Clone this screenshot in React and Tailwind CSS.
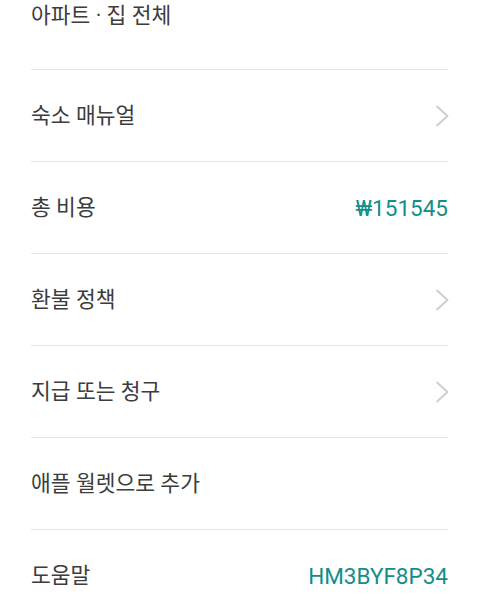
import React from "react";

const Chevron = () => (
  <svg width="14" height="22" viewBox="0 0 14 22" fill="none" className="shrink-0 mr-[-1px]">
    <path d="M2 1.5 L12.5 11 L2 20.5" stroke="#cdcdcd" strokeWidth="1.8" strokeLinecap="round" strokeLinejoin="round" />
  </svg>
);

const rows = [
  { label: "숙소 매뉴얼", chevron: true },
  { label: "총 비용", value: "₩151545" },
  { label: "환불 정책", chevron: true },
  { label: "지급 또는 청구", chevron: true },
  { label: "애플 월렛으로 추가" },
  { label: "도움말", value: "HM3BYF8P34" },
];

export default function App() {
  return (
    <div
      className="w-[480px] h-[608px] overflow-hidden bg-white text-[#3c3c3c]"
      style={{ fontFamily: 'Roboto, "Noto Sans CJK KR", "Noto Sans", sans-serif' }}
    >
      <div className="pl-[31px] pr-[32px]">
        <div className="h-[69px] pt-[1px] text-[21.5px] leading-[30px]">아파트 · 집 전체</div>
        {rows.map((r, i) => (
          <div key={i} className="border-t border-[#e6e6e6] h-[92px] flex items-center justify-between">
            <span className="text-[21.5px] leading-[30px]">{r.label}</span>
            {r.chevron && <Chevron />}
            {r.value && <span className="text-[22.5px] leading-[30px] text-[#138e89]">{r.value}</span>}
          </div>
        ))}
      </div>
    </div>
  );
}
